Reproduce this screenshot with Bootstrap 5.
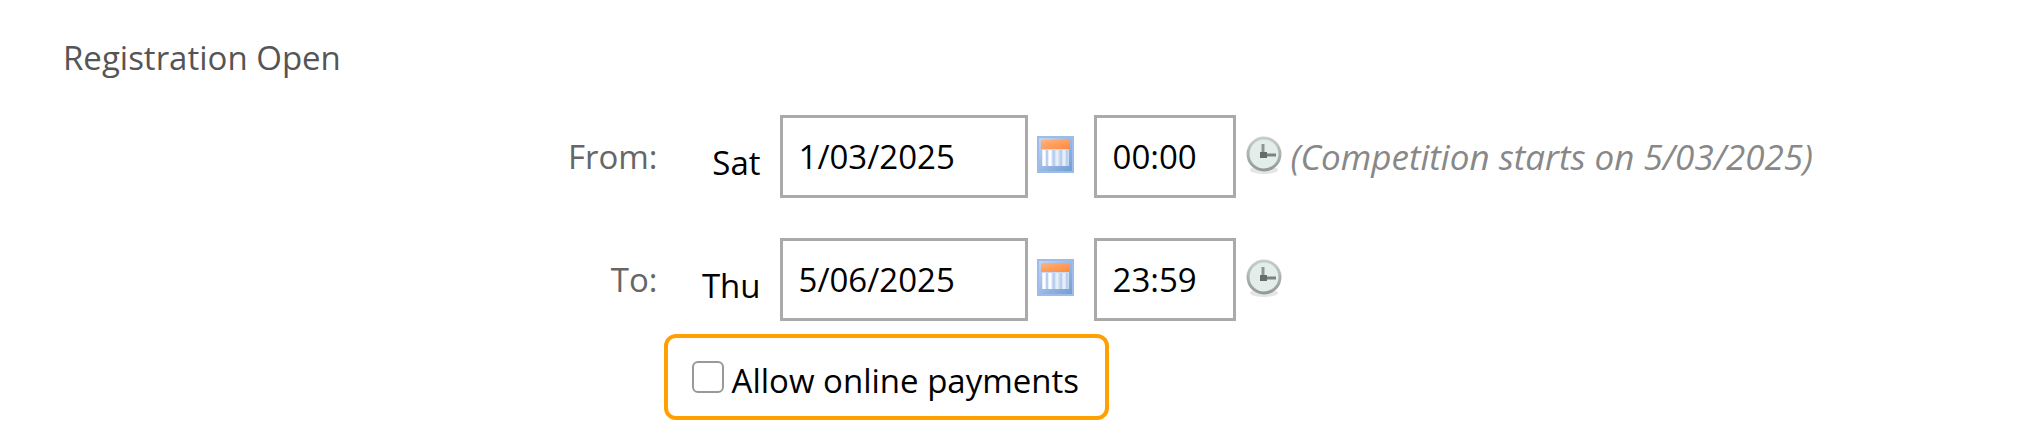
<!DOCTYPE html>
<html lang="en">
<head>
<meta charset="utf-8">
<meta name="viewport" content="width=device-width, initial-scale=1">
<title>Registration Open</title>
<link href="https://cdn.jsdelivr.net/npm/bootstrap@5.3.0/dist/css/bootstrap.min.css" rel="stylesheet">
<style>
  body { font-family: "Open Sans", "Noto Sans", sans-serif; font-size: 33px; line-height: 44px; color: #000; background: #fff; }
  .section-title { font-size: 33px; font-weight: 400; line-height: 44px; color: #555; padding: 36px 63px 35px; }
  .form-grid { display: grid; grid-template-columns: 32.8% 1fr; row-gap: 40px; }
  .field-label { color: #666; padding-right: 6px; text-align: right; }
  .day { width: 97px; margin-right: 19px; text-align: right; padding-top: 12px; }
  .form-control.entry { height: 83px; border: 3px solid #aaa; border-radius: 0; color: #000; font-size: 33px; padding: 0 16px; }
  .entry.date { width: 248px; margin-right: 9px; }
  .entry.time { width: 142px; margin: 0 9px 0 19px; }
  .picker { border: 0; background: none; padding: 0 0 4px; width: 38px; height: 42px; line-height: 0; }
  .hint { color: #888; font-size: 35px; }
  .payments { grid-column: 2; justify-self: start; margin-top: -27px; border: 4px solid #ffa000; border-radius: 12px; height: 86px; padding: 0 26px 0 24px; }
  .form-check-input.pay-box { width: 32px; height: 32px; border: 2px solid #999; border-radius: 6px; }
</style>
</head>
<body>
<svg class="position-absolute" width="0" height="0" aria-hidden="true">
  <defs>
    <linearGradient id="calBlue" x1="0" y1="0" x2="1" y2="1"><stop offset="0" stop-color="#c3d8f5"/><stop offset="1" stop-color="#6f9bd3"/></linearGradient>
    <linearGradient id="calOrange" x1="0" y1="0" x2="1" y2="1"><stop offset="0" stop-color="#ffb27c"/><stop offset="1" stop-color="#ff8a3c"/></linearGradient>
    <linearGradient id="clockRim" x1="0" y1="0" x2="0" y2="1"><stop offset="0" stop-color="#c6cecb"/><stop offset="1" stop-color="#929997"/></linearGradient>
  </defs>
  <symbol id="calendar" viewBox="0 0 38 38">
    <rect x="1" y="1" width="35" height="35" fill="url(#calBlue)" stroke="#9dbce8" stroke-width="2"/>
    <rect x="5" y="13" width="27" height="17" fill="#c9daf2"/>
    <path d="M7 14v16M13 14v16" stroke="#fff" stroke-width="3"/>
    <path d="M20 14v16M27 14v16" stroke="#e6eefa" stroke-width="3"/>
    <path d="M10 14v16M17 14v16M24 14v16M30 14v16" stroke="#a9c4e8" stroke-width="1"/>
    <rect x="4" y="4" width="29" height="9" fill="url(#calOrange)"/>
  </symbol>
  <symbol id="clock" viewBox="0 0 38 38">
    <ellipse cx="19" cy="34" rx="14" ry="4" fill="#e4e6e5"/>
    <circle cx="19" cy="18" r="16" fill="#e3eeeb" stroke="url(#clockRim)" stroke-width="3"/>
    <path d="M18 8v11" stroke="#8d9694" stroke-width="3"/>
    <path d="M15 19h16" stroke="#7b8280" stroke-width="3"/>
    <rect x="15" y="16" width="7" height="6" fill="#666c6a"/>
  </symbol>
</svg>
<main>
  <h1 class="section-title m-0">Registration Open</h1>
  <form class="form-grid align-items-center">
    <label class="field-label" for="fromDate">From:</label>
    <div class="d-flex align-items-center">
      <span class="day">Sat</span>
      <input id="fromDate" class="form-control entry date" type="text" value="1/03/2025">
      <button class="picker" type="button" aria-label="Pick start date"><svg width="38" height="38"><use href="#calendar"/></svg></button>
      <input class="form-control entry time" type="text" value="00:00" aria-label="Start time">
      <button class="picker" type="button" aria-label="Pick start time"><svg width="38" height="38"><use href="#clock"/></svg></button>
      <em class="hint ms-2">(Competition starts on 5/03/2025)</em>
    </div>
    <label class="field-label" for="toDate">To:</label>
    <div class="d-flex align-items-center">
      <span class="day">Thu</span>
      <input id="toDate" class="form-control entry date" type="text" value="5/06/2025">
      <button class="picker" type="button" aria-label="Pick end date"><svg width="38" height="38"><use href="#calendar"/></svg></button>
      <input class="form-control entry time" type="text" value="23:59" aria-label="End time">
      <button class="picker" type="button" aria-label="Pick end time"><svg width="38" height="38"><use href="#clock"/></svg></button>
    </div>
    <div class="payments d-flex align-items-center">
      <input id="payOnline" class="form-check-input pay-box m-0 me-2" type="checkbox">
      <label for="payOnline" class="pt-2">Allow online payments</label>
    </div>
  </form>
</main>
<script src="https://cdn.jsdelivr.net/npm/bootstrap@5.3.0/dist/js/bootstrap.bundle.min.js"></script>
</body>
</html>
